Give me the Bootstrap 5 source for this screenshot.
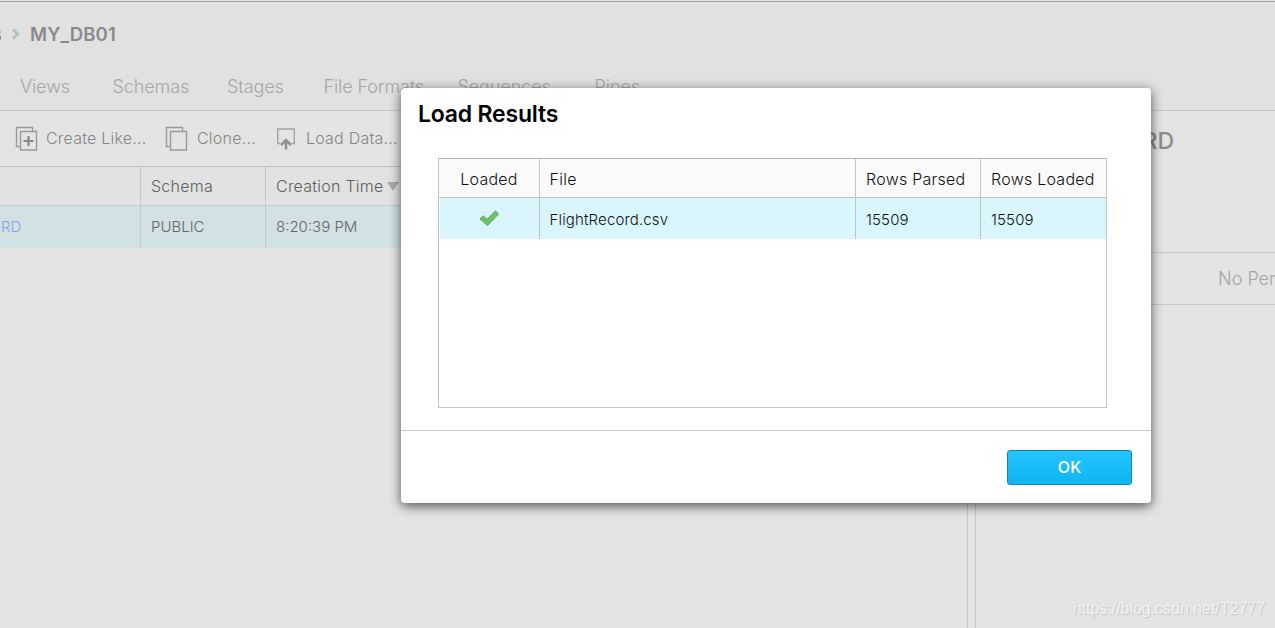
<!DOCTYPE html>
<html lang="en">
<head>
<meta charset="utf-8">
<meta name="viewport" content="width=device-width, initial-scale=1">
<title>MY_DB01 - Load Results</title>
<link href="https://cdn.jsdelivr.net/npm/bootstrap@5.3.0/dist/css/bootstrap.min.css" rel="stylesheet">
<style>
  body { font-family: Inter, "Liberation Sans", sans-serif; font-weight: 300; background: #e4e4e4; height: 628px; overflow: hidden; color: #606060; white-space: nowrap; }
  .app { height: 628px; }
  .topbar { height: 111px; background: #e1e1e1; border-bottom: 1px solid #c6c6c6; padding-top: 1px; }
  .topbar::before { content: ""; display: block; height: 1px; background: #a3a5a5; }
  .crumbs { height: 64px; line-height: 64px; font-size: 18.5px; font-weight: 600; color: #8a8a8a; margin-left: -8px; letter-spacing: .1px; }
  .crumbs .prev { width: 10px; font-weight: 500; }
  .crumbs svg { margin: 0 10px 0 9px; }
  .tabs { padding-left: 20px; line-height: 42px; font-size: 18px; color: #a6a6a6; letter-spacing: -.1px; }
  .tabs a { color: inherit; text-decoration: none; }
  .w-views { width: 92.500px; } .w-schemas { width: 114.500px; } .w-stages { width: 96.500px; } .w-formats { width: 134px; } .w-seq { width: 137px; }
  .left-pane { width: 968px; border-right: 1px solid #c8c8c8; }
  .splitter { width: 8px; border-right: 1px solid #c8c8c8; }
  .tools { height: 56px; border-bottom: 1px solid #c0c0c0; padding-left: 15px; font-size: 16px; letter-spacing: .22px; color: #868686; }
  .tools span { position: relative; top: -1px; }
  .tool-like { width: 150px; } .tool-clone { width: 111px; }
  .tool-clone span, .tool-load span { margin-left: 1px; }
  .grid-bg .cell-h { height: 39px; line-height: 39px; border-bottom: 1px solid #c9c9c9; font-size: 16px; letter-spacing: .24px; background: #e2e2e2; }
  .grid-bg .cell-b { height: 42px; line-height: 42px; font-size: 15px; background: #d1e1e4; color: #666; }
  .grid-bg .sep { border-right: 1px solid #c8c8c8; }
  .col-name { width: 141px; padding-left: 1px; color: #83a3e3; } .col-schema { width: 125px; padding-left: 10px; } .col-time { flex: 1; padding-left: 10px; }
  .sort { border: 6px solid transparent; border-top: 9px solid #aaa; border-bottom: 0; margin-left: 3px; display: inline-block; vertical-align: 1px; }
  .side-title { height: 142px; border-bottom: 1px solid #c8c8c8; font-size: 23px; font-weight: 500; color: #8c8c8c; line-height: 60px; padding-right: 101px; }
  .side-empty { height: 52px; line-height: 52px; border-bottom: 1px solid #c8c8c8; font-size: 18px; color: #a6a6a6; padding-left: 242px; overflow: hidden; }
  .results { position: absolute; left: 401px; top: 88px; width: 750px; height: 415px; border: 0; border-radius: 4px; background: #fff; color: #111; box-shadow: 0 3px 12px rgba(0,0,0,.65); }
  .results-title { font-size: 23px; font-weight: 600; line-height: 52px; height: 70px; padding-left: 17px; color: #000; margin: 0; letter-spacing: -.2px; }
  .result-grid { width: 669px; height: 250px; margin-left: 37px; border: 1px solid #c4c4c4; border-top-color: #b4b4b4; }
  .result-grid .hd { height: 39px; line-height: 41px; font-size: 16px; letter-spacing: .25px; background: #fafafa; border-bottom: 1px solid #c4c4c4; }
  .result-grid .bd { height: 41px; line-height: 43px; font-size: 15px; background: #d9f6fc; margin-left: 1px; letter-spacing: .15px; }
  .result-grid .hd > div:not(:last-child), .result-grid .bd > div:not(:last-child) { border-right: 1px solid #c4c4c4; }
  .c1 { width: 101px; } .bd .c1 { width: 100px; } .c2 { width: 316px; padding-left: 9.500px; } .c3 { width: 125px; padding-left: 10px; } .c4 { flex: 1; padding-left: 10px; }
  .results-foot { margin-top: 22px; height: 73px; border-top: 1px solid #c8c8c8; padding: 19px 19px 0 0; }
  .btn-ok { width: 125px; height: 35px; padding: 0; border: 1px solid #0f86b2; border-radius: 3px; background: linear-gradient(#23c5fc, #0fb6f2); color: #fff; font-size: 16px; font-weight: 500; line-height: 33px; }
  .btn-ok:hover { color: #fff; }
  .watermark { position: absolute; right: 10px; bottom: 7px; font: 16px/24px "Liberation Sans", sans-serif; color: #f2f2f2; text-shadow: 1px 1px 1px #c4c4c4; letter-spacing: -.03px; }
</style>
</head>
<body>
<div class="app d-flex flex-column position-relative overflow-hidden">
  <header class="topbar">
    <div class="crumbs d-flex align-items-center">
      <span class="prev text-end">s</span>
      <svg width="9" height="12" viewBox="0 0 9 12"><path d="M2 1.200 6.800 6 2 10.800" fill="none" stroke="#bcbcbc" stroke-width="2.8"/></svg>
      <span class="db">MY_DB01</span>
    </div>
    <nav class="tabs d-flex">
      <a class="w-views">Views</a><a class="w-schemas">Schemas</a><a class="w-stages">Stages</a><a class="w-formats">File Formats</a><a class="w-seq">Sequences</a><a>Pipes</a>
    </nav>
  </header>
  <main class="d-flex flex-grow-1">
    <section class="left-pane flex-shrink-0">
      <div class="tools d-flex align-items-center">
        <div class="tool-like d-flex align-items-center">
          <svg class="me-2" width="23" height="25" viewBox="0 0 23 25" fill="none" stroke="#999" stroke-width="1.4"><path d="M4.500 20.500H1.500V1.500H17.500V5M5.500 5.500H21.500V24H5.500Z"/><path d="M13.500 10V20M8.500 15H18.500" stroke="#888" stroke-width="2.200"/></svg>
          <span>Create Like...</span>
        </div>
        <div class="tool-clone d-flex align-items-center">
          <svg class="me-2" width="23" height="25" viewBox="0 0 23 25" fill="none" stroke="#999" stroke-width="1.4"><path d="M4.500 20.500H1.500V1.500H17.500V5M5.500 5.500H21.500V24H5.500Z"/></svg>
          <span>Clone...</span>
        </div>
        <div class="tool-load d-flex align-items-center">
          <svg class="me-2" width="21" height="24" viewBox="0 0 21 24" fill="none" stroke="#a0a0a0"><path d="M4 16.500H1.700V2H18.300V16.500H16" stroke-width="1.300"/><path d="M10 22.500V14M5 18 10 13 15 18" stroke="#909090" stroke-width="2.500"/></svg>
          <span>Load Data...</span>
        </div>
      </div>
      <div class="grid-bg">
        <div class="cell-h d-flex"><div class="col-name sep"></div><div class="col-schema sep">Schema</div><div class="col-time">Creation Time<i class="sort"></i></div></div>
        <div class="cell-b d-flex"><div class="col-name sep">RD</div><div class="col-schema sep">PUBLIC</div><div class="col-time">8:20:39 PM</div></div>
      </div>
    </section>
    <div class="splitter flex-shrink-0"></div>
    <aside class="flex-grow-1 overflow-hidden">
      <div class="side-title text-end">FLIGHTRECORD</div>
      <div class="side-empty">No Per</div>
    </aside>
  </main>

  <div class="results card" role="dialog">
    <h1 class="results-title">Load Results</h1>
    <div class="result-grid">
      <div class="hd d-flex"><div class="c1 text-center">Loaded</div><div class="c2">File</div><div class="c3">Rows Parsed</div><div class="c4">Rows Loaded</div></div>
      <div class="bd d-flex">
        <div class="c1 d-flex justify-content-center align-items-center">
          <svg width="21" height="17" viewBox="0 0 21 17"><path d="M1 8.800 4.300 6 8 9.300 16.500 1 19.500 4 8.500 15.500Z" fill="#72c06b" stroke="#55a352" stroke-linejoin="round"/></svg>
        </div>
        <div class="c2">FlightRecord.csv</div><div class="c3">15509</div><div class="c4">15509</div>
      </div>
    </div>
    <div class="results-foot text-end"><button class="btn btn-ok" type="button">OK</button></div>
  </div>
  <div class="watermark">https://blog.csdn.net/T2777</div>
</div>
<script src="https://cdn.jsdelivr.net/npm/bootstrap@5.3.0/dist/js/bootstrap.bundle.min.js"></script>
</body>
</html>
